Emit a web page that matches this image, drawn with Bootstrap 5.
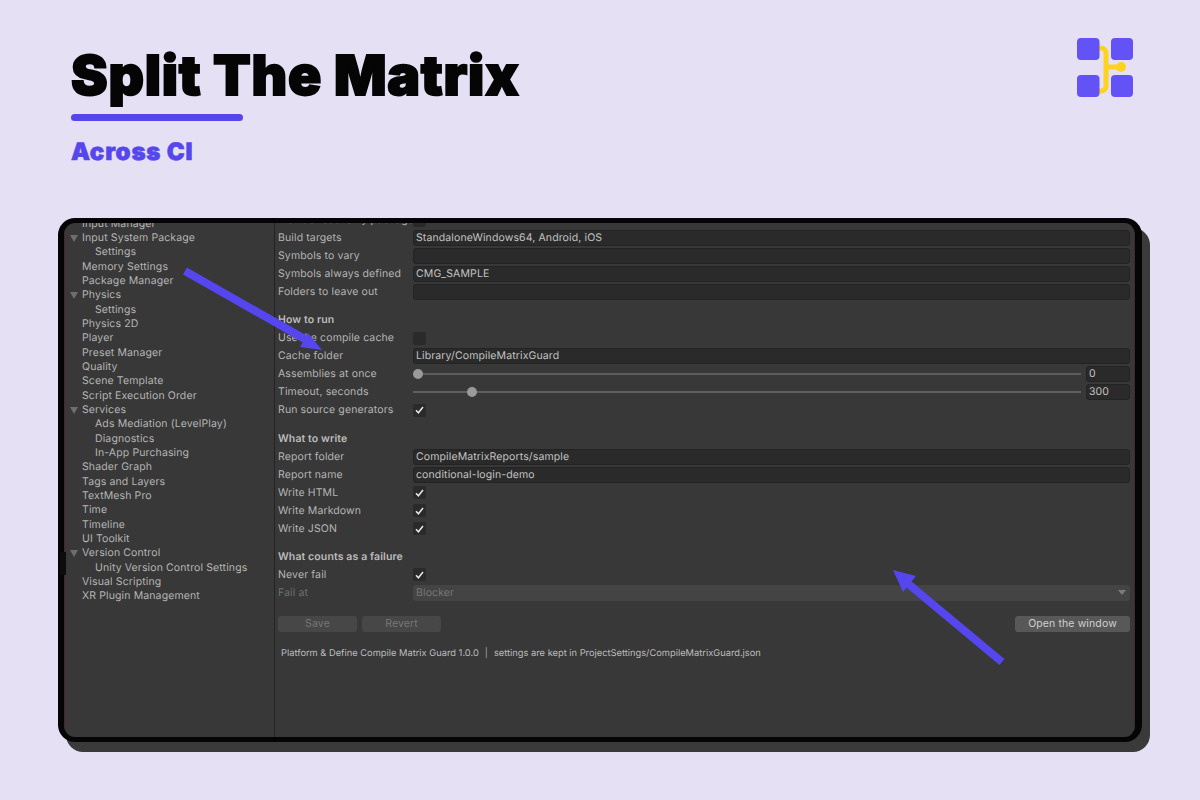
<!DOCTYPE html>
<html lang="en">
<head>
<meta charset="UTF-8">
<title>Split The Matrix</title>
<link rel="stylesheet" href="https://cdn.jsdelivr.net/npm/bootstrap@5.3.0/dist/css/bootstrap.min.css">
<style>
body { background: #e5e0f3; width: 1200px; height: 800px; overflow: hidden; font-family: Inter, "Liberation Sans", sans-serif; text-rendering: geometricPrecision; }
.slide { width: 1200px; height: 800px; }
.slide-head { height: 218px; padding: 42px 67px 0 71px; }
.slide-title { font-family: Inter, "Liberation Sans", sans-serif; font-weight: 900; font-size: 55px; line-height: 68px; letter-spacing: .75px; color: #050505; -webkit-text-stroke: 1.8px #050505; margin: 0; }
.title-rule { width: 172px; height: 7px; border-radius: 4px; background: #5546ee; margin-top: 4px; }
.slide-sub { font-family: Inter, "Liberation Sans", sans-serif; font-weight: 900; font-size: 24px; line-height: 32px; letter-spacing: .8px; color: #5546ee; -webkit-text-stroke: .6px #5546ee; margin-top: 15px; }
.unity-win { width: 1084px; height: 524px; margin-left: 58px; background: #383838; border: solid #050505; border-width: 5px 7px 5px 6px; border-radius: 17px; box-shadow: 8px 10px 0 #3a3a3a; overflow: hidden; color: #b4b4b4; font-size: 10.5px; letter-spacing: .12px; }
.tree-pane { width: 211px; height: 100%; border-right: 1px solid #232323; border-left: 1px solid #4a2530; flex: none; }
.tree-list { margin-top: -6.2px; }
.tree-row { height: 14.33px; line-height: 14.33px; padding-left: 17px; white-space: nowrap; position: relative; }
.tree-row.sub { padding-left: 30px; }
.tree-row.open::before { content: ""; position: absolute; left: 5px; top: 4px; border: 4px solid transparent; border-top: 7px solid #6e6e6e; border-bottom: 0; }
.form-pane { padding: 0 4px 0 3px; border-right: 1px solid #4a2530; }
.form-list { margin-top: -12px; }
.prop-row { height: 18px; }
.prop-row .lbl { width: 136px; flex: none; white-space: nowrap; margin-right: -1px; }
.prop-head { height: 18px; line-height: 18px; margin-top: 10.3px; font-weight: 600; color: #bcbcbc; }
.field { height: 16px; line-height: 14px; background: #2a2a2a; border: 1px solid #232323; border-radius: 3px; padding-left: 2px; color: #c2c2c2; }
.chk { width: 13px; height: 13px; background: #2a2a2a; border-radius: 2px; }
.slider-track { height: 2px; background: #5e5e5e; position: relative; }
.slider-thumb { position: absolute; top: -4px; width: 10px; height: 10px; border-radius: 50%; background: #9a9a9a; }
.num-field { width: 44px; margin-left: 5px; flex: none; }
.dis { color: #6e6e6e; }
.drop-field { height: 16px; line-height: 16px; background: #444; border-radius: 3px; padding: 0 4px 0 3px; color: #767676; }
.drop-arrow { border: 4px solid transparent; border-top: 5px solid #7c7c7c; border-bottom: 0; }
.u-btn { height: 16px; line-height: 15px; padding: 0; font-size: 10.5px; border-radius: 3px; letter-spacing: .12px; border: 0; text-align: center; }
.u-btn.off { width: 79px; background: #474747; color: #767676; }
.u-btn.on { width: 115px; background: #585858; color: #d0d0d0; }
.btn-line { margin-top: 14px; gap: 5px; }
.foot-line { margin-top: 15px; padding-left: 3px; font-size: 9.3px; letter-spacing: 0; color: #bdbdbd; line-height: 14px; white-space: nowrap; }
.foot-sep { margin: 0 6px; color: #a5a5a5; }
.win-notch { position: absolute; left: 60px; top: 552px; width: 6px; height: 23px; background: #0c0c0c; }
.arrow-layer { position: absolute; left: 0; top: 0; pointer-events: none; }
</style>
</head>
<body>
<div class="slide position-relative">
  <div class="slide-head d-flex justify-content-between align-items-start">
    <div>
      <h1 class="slide-title">Split The Matrix</h1>
      <div class="title-rule"></div>
      <div class="slide-sub">Across CI</div>
    </div>
    <svg width="56" height="59" viewBox="0 0 56 59" style="margin-top:-4px">
      <path d="M22 10h2a5 5 0 0 1 5 5v33a5 5 0 0 1-5 5h-2M29 29h15" fill="none" stroke="#ffd21f" stroke-width="5"/>
      <circle cx="44" cy="29" r="5" fill="#ffd21f"/>
      <rect x="0" y="0" width="22.500" height="22" rx="4" fill="#6352f5"/>
      <rect x="34" y="0" width="22" height="22" rx="4" fill="#6352f5"/>
      <rect x="0" y="37" width="22.500" height="22" rx="4" fill="#6352f5"/>
      <rect x="34" y="37" width="22" height="22" rx="4" fill="#6352f5"/>
    </svg>
  </div>

  <div class="unity-win d-flex">
    <div class="tree-pane overflow-hidden">
      <div class="tree-list">
        <div class="tree-row">Input Manager</div>
        <div class="tree-row open">Input System Package</div>
        <div class="tree-row sub">Settings</div>
        <div class="tree-row">Memory Settings</div>
        <div class="tree-row">Package Manager</div>
        <div class="tree-row open">Physics</div>
        <div class="tree-row sub">Settings</div>
        <div class="tree-row">Physics 2D</div>
        <div class="tree-row">Player</div>
        <div class="tree-row">Preset Manager</div>
        <div class="tree-row">Quality</div>
        <div class="tree-row">Scene Template</div>
        <div class="tree-row">Script Execution Order</div>
        <div class="tree-row open">Services</div>
        <div class="tree-row sub">Ads Mediation (LevelPlay)</div>
        <div class="tree-row sub">Diagnostics</div>
        <div class="tree-row sub">In-App Purchasing</div>
        <div class="tree-row">Shader Graph</div>
        <div class="tree-row">Tags and Layers</div>
        <div class="tree-row">TextMesh Pro</div>
        <div class="tree-row">Time</div>
        <div class="tree-row">Timeline</div>
        <div class="tree-row">UI Toolkit</div>
        <div class="tree-row open">Version Control</div>
        <div class="tree-row sub">Unity Version Control Settings</div>
        <div class="tree-row">Visual Scripting</div>
        <div class="tree-row">XR Plugin Management</div>
      </div>
    </div>

    <div class="form-pane flex-grow-1 overflow-hidden">
      <div class="form-list">
        <div class="prop-row d-flex align-items-center"><div class="lbl">Include read-only packages</div><div class="chk"></div></div>
        <div class="prop-row d-flex align-items-center"><div class="lbl">Build targets</div><div class="field flex-grow-1">StandaloneWindows64, Android, iOS</div></div>
        <div class="prop-row d-flex align-items-center"><div class="lbl">Symbols to vary</div><div class="field flex-grow-1"></div></div>
        <div class="prop-row d-flex align-items-center"><div class="lbl">Symbols always defined</div><div class="field flex-grow-1">CMG_SAMPLE</div></div>
        <div class="prop-row d-flex align-items-center"><div class="lbl">Folders to leave out</div><div class="field flex-grow-1"></div></div>

        <div class="prop-head">How to run</div>
        <div class="prop-row d-flex align-items-center"><div class="lbl">Use the compile cache</div><div class="chk"></div></div>
        <div class="prop-row d-flex align-items-center"><div class="lbl">Cache folder</div><div class="field flex-grow-1">Library/CompileMatrixGuard</div></div>
        <div class="prop-row d-flex align-items-center"><div class="lbl">Assemblies at once</div>
          <div class="slider-track flex-grow-1"><div class="slider-thumb" style="left:0"></div></div><div class="field num-field">0</div></div>
        <div class="prop-row d-flex align-items-center"><div class="lbl">Timeout, seconds</div>
          <div class="slider-track flex-grow-1"><div class="slider-thumb" style="left:54px"></div></div><div class="field num-field">300</div></div>
        <div class="prop-row d-flex align-items-center"><div class="lbl">Run source generators</div><div class="chk d-flex align-items-center justify-content-center"><svg width="9" height="8" viewBox="0 0 9 8"><path d="M1 4.200 3.400 6.800 8 1" fill="none" stroke="#e8e8e8" stroke-width="1.500"/></svg></div></div>

        <div class="prop-head">What to write</div>
        <div class="prop-row d-flex align-items-center"><div class="lbl">Report folder</div><div class="field flex-grow-1">CompileMatrixReports/sample</div></div>
        <div class="prop-row d-flex align-items-center"><div class="lbl">Report name</div><div class="field flex-grow-1">conditional-login-demo</div></div>
        <div class="prop-row d-flex align-items-center"><div class="lbl">Write HTML</div><div class="chk d-flex align-items-center justify-content-center"><svg width="9" height="8" viewBox="0 0 9 8"><path d="M1 4.200 3.400 6.800 8 1" fill="none" stroke="#e8e8e8" stroke-width="1.500"/></svg></div></div>
        <div class="prop-row d-flex align-items-center"><div class="lbl">Write Markdown</div><div class="chk d-flex align-items-center justify-content-center"><svg width="9" height="8" viewBox="0 0 9 8"><path d="M1 4.200 3.400 6.800 8 1" fill="none" stroke="#e8e8e8" stroke-width="1.500"/></svg></div></div>
        <div class="prop-row d-flex align-items-center"><div class="lbl">Write JSON</div><div class="chk d-flex align-items-center justify-content-center"><svg width="9" height="8" viewBox="0 0 9 8"><path d="M1 4.200 3.400 6.800 8 1" fill="none" stroke="#e8e8e8" stroke-width="1.500"/></svg></div></div>

        <div class="prop-head">What counts as a failure</div>
        <div class="prop-row d-flex align-items-center"><div class="lbl">Never fail</div><div class="chk d-flex align-items-center justify-content-center"><svg width="9" height="8" viewBox="0 0 9 8"><path d="M1 4.200 3.400 6.800 8 1" fill="none" stroke="#e8e8e8" stroke-width="1.500"/></svg></div></div>
        <div class="prop-row d-flex align-items-center"><div class="lbl dis">Fail at</div><div class="drop-field flex-grow-1 d-flex justify-content-between align-items-center"><span>Blocker</span><span class="drop-arrow"></span></div></div>

        <div class="btn-line d-flex">
          <button class="btn u-btn off" type="button">Save</button>
          <button class="btn u-btn off" type="button">Revert</button>
          <button class="btn u-btn on ms-auto" type="button">Open the window</button>
        </div>
        <div class="foot-line">Platform &amp; Define Compile Matrix Guard 1.0.0<span class="foot-sep">|</span>settings are kept in ProjectSettings/CompileMatrixGuard.json</div>
      </div>
    </div>
  </div>

  <div class="win-notch"></div>
  <svg class="arrow-layer" width="1200" height="800" viewBox="0 0 1200 800">
    <path d="M185 271 310 342" stroke="#5546ee" stroke-width="8" fill="none"/>
    <path d="M322 350 308 333 300 347Z" fill="#5546ee"/>
    <path d="M1002 662 906 582" stroke="#5546ee" stroke-width="8" fill="none"/>
    <path d="M893 570 916 576 903 592Z" fill="#5546ee"/>
  </svg>
</div>
</body>
</html>
